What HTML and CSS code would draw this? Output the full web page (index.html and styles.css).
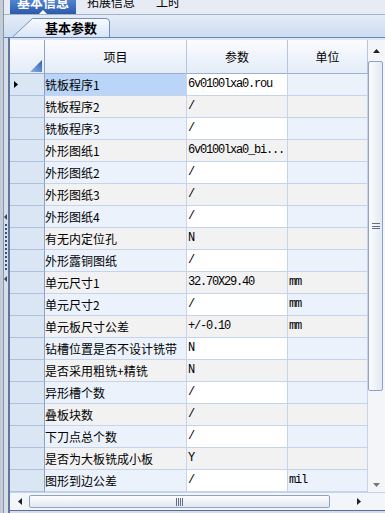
FILE: index.html
```html
<!DOCTYPE html>
<html lang="zh-CN">
<head>
    <meta charset="UTF-8">
    <meta name="viewport" content="width=device-width, initial-scale=1.0">
    <title>基本信息</title>
    <link rel="stylesheet" href="styles.css">
</head>
<body>
<div class="page">
    <div class="edge"></div>
    <div class="panel">
        <div class="toptabs">
            <div class="ttab active">基本信息</div>
            <div class="ttab">拓展信息</div>
            <div class="ttab">工时</div>
        </div>
        <div class="subtabs">
            <div class="stab">
                <svg class="stab-shape" width="98" height="19" viewBox="0 0 98 19">
                    <defs>
                        <linearGradient id="tg" x1="0" y1="0" x2="0" y2="1">
                            <stop offset="0" stop-color="#f9fbff"/>
                            <stop offset="1" stop-color="#d9e5f5"/>
                        </linearGradient>
                    </defs>
                    <path d="M0.5 19 L20.5 0.5 H94 Q97.5 0.5 97.5 4 V19" fill="url(#tg)" stroke="#7590bb"/>
                </svg>
                <span>基本参数</span>
            </div>
        </div>
        <div class="body">
            <div class="splitter">
                <svg width="4" height="6" viewBox="0 0 4 6"><polygon points="0,3 3,0 3,6" fill="#34465f"/></svg>
                <div class="dots"></div>
                <svg width="4" height="6" viewBox="0 0 4 6"><polygon points="0,3 3,0 3,6" fill="#34465f"/></svg>
            </div>
            <div class="grid">
                <div class="grid-main">
                    <div class="table">
                        <div class="row head">
                            <div class="cell c-hd corner-cell">
                                <svg width="12" height="12" viewBox="0 0 12 12">
                                    <defs>
                                        <linearGradient id="cg" x1="1" y1="0" x2="0" y2="1">
                                            <stop offset="0" stop-color="#2f5fb6"/>
                                            <stop offset="1" stop-color="#8fb2e6"/>
                                        </linearGradient>
                                    </defs>
                                    <polygon points="12,0 12,12 0,12" fill="url(#cg)"/>
                                </svg>
                            </div>
                            <div class="cell">项目</div>
                            <div class="cell">参数</div>
                            <div class="cell">单位</div>
                        </div>
                        <div class="rows">
                            <div class="row">
                                <div class="cell c-hd"><svg width="4" height="7" viewBox="0 0 4 7"><polygon points="0,0 4,3.5 0,7" fill="#000"/></svg></div>
                                <div class="cell c-name selected">铣板程序1</div>
                                <div class="cell c-val">6v0100lxa0.rou</div>
                                <div class="cell c-unit"></div>
                            </div>
                            <div class="row">
                                <div class="cell c-hd"></div>
                                <div class="cell c-name">铣板程序2</div>
                                <div class="cell c-val">/</div>
                                <div class="cell c-unit"></div>
                            </div>
                            <div class="row">
                                <div class="cell c-hd"></div>
                                <div class="cell c-name">铣板程序3</div>
                                <div class="cell c-val">/</div>
                                <div class="cell c-unit"></div>
                            </div>
                            <div class="row">
                                <div class="cell c-hd"></div>
                                <div class="cell c-name">外形图纸1</div>
                                <div class="cell c-val">6v0100lxa0_bi...</div>
                                <div class="cell c-unit"></div>
                            </div>
                            <div class="row">
                                <div class="cell c-hd"></div>
                                <div class="cell c-name">外形图纸2</div>
                                <div class="cell c-val">/</div>
                                <div class="cell c-unit"></div>
                            </div>
                            <div class="row">
                                <div class="cell c-hd"></div>
                                <div class="cell c-name">外形图纸3</div>
                                <div class="cell c-val">/</div>
                                <div class="cell c-unit"></div>
                            </div>
                            <div class="row">
                                <div class="cell c-hd"></div>
                                <div class="cell c-name">外形图纸4</div>
                                <div class="cell c-val">/</div>
                                <div class="cell c-unit"></div>
                            </div>
                            <div class="row">
                                <div class="cell c-hd"></div>
                                <div class="cell c-name">有无内定位孔</div>
                                <div class="cell c-val">N</div>
                                <div class="cell c-unit"></div>
                            </div>
                            <div class="row">
                                <div class="cell c-hd"></div>
                                <div class="cell c-name">外形露铜图纸</div>
                                <div class="cell c-val">/</div>
                                <div class="cell c-unit"></div>
                            </div>
                            <div class="row">
                                <div class="cell c-hd"></div>
                                <div class="cell c-name">单元尺寸1</div>
                                <div class="cell c-val">32.70X29.40</div>
                                <div class="cell c-unit">mm</div>
                            </div>
                            <div class="row">
                                <div class="cell c-hd"></div>
                                <div class="cell c-name">单元尺寸2</div>
                                <div class="cell c-val">/</div>
                                <div class="cell c-unit">mm</div>
                            </div>
                            <div class="row">
                                <div class="cell c-hd"></div>
                                <div class="cell c-name">单元板尺寸公差</div>
                                <div class="cell c-val">+/-0.10</div>
                                <div class="cell c-unit">mm</div>
                            </div>
                            <div class="row">
                                <div class="cell c-hd"></div>
                                <div class="cell c-name">钻槽位置是否不设计铣带</div>
                                <div class="cell c-val">N</div>
                                <div class="cell c-unit"></div>
                            </div>
                            <div class="row">
                                <div class="cell c-hd"></div>
                                <div class="cell c-name">是否采用粗铣+精铣</div>
                                <div class="cell c-val">N</div>
                                <div class="cell c-unit"></div>
                            </div>
                            <div class="row">
                                <div class="cell c-hd"></div>
                                <div class="cell c-name">异形槽个数</div>
                                <div class="cell c-val">/</div>
                                <div class="cell c-unit"></div>
                            </div>
                            <div class="row">
                                <div class="cell c-hd"></div>
                                <div class="cell c-name">叠板块数</div>
                                <div class="cell c-val">/</div>
                                <div class="cell c-unit"></div>
                            </div>
                            <div class="row">
                                <div class="cell c-hd"></div>
                                <div class="cell c-name">下刀点总个数</div>
                                <div class="cell c-val">/</div>
                                <div class="cell c-unit"></div>
                            </div>
                            <div class="row">
                                <div class="cell c-hd"></div>
                                <div class="cell c-name">是否为大板铣成小板</div>
                                <div class="cell c-val">Y</div>
                                <div class="cell c-unit"></div>
                            </div>
                            <div class="row">
                                <div class="cell c-hd"></div>
                                <div class="cell c-name">图形到边公差</div>
                                <div class="cell c-val">/</div>
                                <div class="cell c-unit">mil</div>
                            </div>
                        </div>
                    </div>
                    <div class="vscroll">
                        <div class="vbtn up"><svg width="7" height="4" viewBox="0 0 7 4"><polygon points="0,4 3.5,0 7,4" fill="#222"/></svg></div>
                        <div class="vthumb"><div class="grip-h"></div></div>
                        <div class="vspace"></div>
                        <div class="vbtn down"><svg width="7" height="4" viewBox="0 0 7 4"><polygon points="0,0 7,0 3.5,4" fill="#777"/></svg></div>
                    </div>
                </div>
                <div class="hscroll-row">
                    <div class="hscroll">
                        <div class="hbtn"><svg width="4" height="7" viewBox="0 0 4 7"><polygon points="4,0 4,7 0,3.5" fill="#222"/></svg></div>
                        <div class="hthumb"><div class="grip-v"></div></div>
                        <div class="hspace"></div>
                        <div class="hbtn"><svg width="4" height="7" viewBox="0 0 4 7"><polygon points="0,0 4,3.5 0,7" fill="#222"/></svg></div>
                    </div>
                    <div class="corner"></div>
                </div>
                <div class="foot"></div>
            </div>
        </div>
    </div>
</div>
</body>
</html>
```

FILE: styles.css
```css
* {
    box-sizing: border-box;
}
body {
    margin: 0;
    width: 385px;
    height: 513px;
    overflow: hidden;
    background-color: #d6dde8;
    font-family: "Noto Sans CJK SC", sans-serif;
    font-size: 12px;
    color: #000;
}
.page {
    display: flex;
    height: 513px;
}
.edge {
    width: 4px;
    background-color: #c4ccd8;
    border-right: 1px solid #8a96a8;
}
.panel {
    flex: 1;
    display: flex;
    flex-direction: column;
    min-width: 0;
}

/* top tabs */
.toptabs {
    height: 15px;
    display: flex;
    gap: 1px;
    padding-left: 6px;
    background-color: #e7ecf4;
    border-bottom: 1px solid #a3b3ca;
}
.ttab {
    height: 14px;
    line-height: 4px;
    padding: 0 10px;
    white-space: nowrap;
}
.ttab.active {
    position: relative;
    padding: 0 7px;
    font-size: 13px;
    font-weight: bold;
    color: #fff;
    background: linear-gradient(#5284d0, #2a5aa8);
}
.ttab.active::after {
    content: "";
    position: absolute;
    left: 29px;
    bottom: 0;
    border-left: 4px solid transparent;
    border-right: 4px solid transparent;
    border-bottom: 4px solid #fff;
}

/* sub tabs */
.subtabs {
    height: 23px;
    padding: 3px 0 0 8px;
    background: linear-gradient(#e3ecf8, #cddcf0);
    border-bottom: 1px solid #6685b8;
}
.stab {
    position: relative;
    width: 98px;
    height: 19px;
}
.stab-shape {
    position: absolute;
    left: 0;
    top: 0;
}
.stab span {
    position: relative;
    display: block;
    padding-left: 33px;
    line-height: 19px;
    font-size: 13px;
    font-weight: bold;
}

/* grid area */
.body {
    flex: 1;
    display: flex;
    min-height: 0;
}
.splitter {
    width: 4px;
    background-color: #d6dee9;
    padding-top: 176px;
    display: flex;
    flex-direction: column;
    gap: 4px;
}
.splitter svg {
    display: block;
}
.dots {
    width: 2px;
    height: 48px;
    margin-left: 1px;
    background: repeating-linear-gradient(#3f5270 0 2px, transparent 2px 4px);
}
.grid {
    flex: 1;
    display: flex;
    flex-direction: column;
    min-width: 0;
    border-left: 2px solid #5f779e;
    background-color: #dde6f2;
    padding-top: 2px;
}
.grid-main {
    display: flex;
    height: 452px;
}
.table {
    width: 358px;
    overflow: hidden;
    background-color: #fff;
}
.row {
    display: grid;
    grid-template-columns: 35px 142px 101px 80px;
    height: 22px;
}
.cell {
    border-right: 1px solid #c5d4ea;
    border-bottom: 1px solid #c5d4ea;
    line-height: 21px;
    white-space: nowrap;
    overflow: hidden;
}
.head {
    height: 34px;
}
.head .cell {
    line-height: 33px;
    text-align: center;
    background: linear-gradient(#fbfcff, #e4ecf7);
    border-right-color: #b5c6de;
    border-bottom-color: #9cb1cf;
}
.head .corner-cell {
    display: flex;
    align-items: flex-end;
    justify-content: flex-end;
    padding: 0 2px 1px 0;
    border-right-color: #8ba3c8;
}
.corner-cell svg {
    display: block;
}
.c-hd {
    background-color: #dbe6f5;
    border-right-color: #8ba3c8;
    border-bottom-color: #aec0da;
    display: flex;
    align-items: center;
    padding-left: 4px;
}
.c-name {
    padding-left: 0;
}
.c-val,
.c-unit {
    padding-left: 1px;
    font-family: "Liberation Mono", monospace;
    font-size: 12px;
    letter-spacing: -1.2px;
}
.rows .row:nth-child(odd) .c-name,
.rows .row:nth-child(odd) .c-unit {
    background-color: #ebf2fc;
}
.rows .row:nth-child(odd) .c-val {
    background-color: #fff;
}
.rows .row:nth-child(even) .c-name,
.rows .row:nth-child(even) .c-val,
.rows .row:nth-child(even) .c-unit {
    background-color: #f2f2f2;
}
.rows .row .c-name.selected {
    background-color: #bad5f8;
}

/* scrollbars */
.vscroll {
    width: 17px;
    background-color: #f3f5f9;
    display: flex;
    flex-direction: column;
}
.vbtn {
    display: flex;
    align-items: center;
    justify-content: center;
}
.vbtn.up {
    height: 21px;
}
.vbtn.down {
    height: 14px;
}
.vbtn svg,
.hbtn svg {
    display: block;
}
.vthumb {
    width: 15px;
    height: 330px;
    border: 1px solid #8ea3c1;
    border-radius: 2px;
    background: linear-gradient(90deg, #fbfcfe, #e3e9f2);
    display: flex;
    align-items: center;
    justify-content: center;
}
.grip-h {
    width: 8px;
    height: 6px;
    background: repeating-linear-gradient(#5f6f86 0 1px, transparent 1px 2.5px);
}
.vspace {
    flex: 1;
}
.hscroll-row {
    display: flex;
    height: 18px;
}
.hscroll {
    width: 358px;
    display: flex;
    align-items: center;
    background-color: #f2f5f9;
    border-top: 1px solid #c8d4e6;
}
.hbtn {
    width: 19px;
    display: flex;
    justify-content: center;
}
.hthumb {
    width: 301px;
    height: 13px;
    border: 1px solid #8ea3c1;
    border-radius: 2px;
    background: linear-gradient(#fbfcfe, #e3e9f2);
    display: flex;
    align-items: center;
    justify-content: center;
}
.grip-v {
    width: 7px;
    height: 8px;
    background: repeating-linear-gradient(90deg, #5f6f86 0 1px, transparent 1px 2px);
}
.hspace {
    flex: 1;
}
.corner {
    flex: 1;
    background-color: #f2f5f9;
    border-top: 1px solid #c8d4e6;
}
.foot {
    flex: 1;
    border-top: 1px solid #58709a;
    background-color: #d6dde8;
}
```
